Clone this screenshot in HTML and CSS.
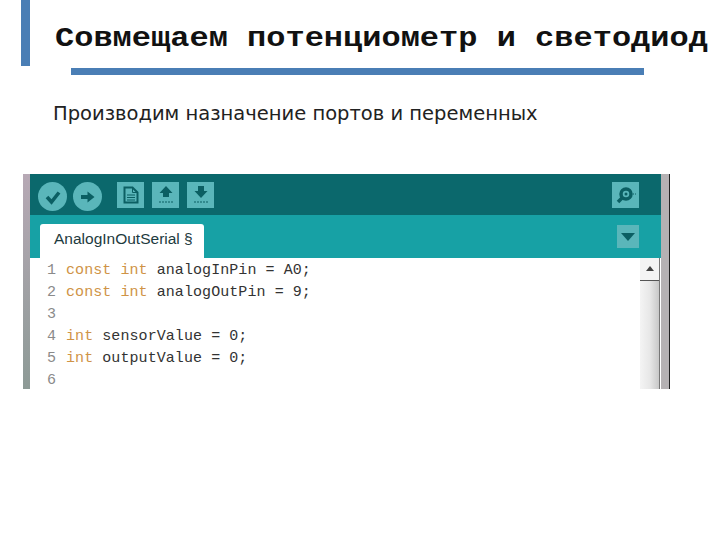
FILE: index.html
```html
<!DOCTYPE html>
<html lang="ru">
<head>
<meta charset="utf-8">
<title>Совмещаем потенциометр и светодиод</title>
<link rel="stylesheet" href="styles.css">
</head>
<body>
<div class="slide">
  <header class="head">
    <div class="accent"></div>
    <h1 class="title">Совмещаем потенциометр и светодиод</h1>
  </header>
  <div class="rule"></div>
  <p class="lead">Производим назначение портов и переменных</p>
  <div class="ide">
    <div class="edge-left"></div>
    <div class="window">
      <div class="toolbar">
        <span class="round"><svg width="18" height="18" viewBox="0 0 18 18"><path d="M3 9l4.500 5L15 4.500" fill="none" stroke="#0b5f63" stroke-width="3.600"/></svg></span>
        <span class="round"><svg width="16" height="14" viewBox="0 0 16 14"><path d="M1 5h6.500V1.500L14.500 7l-7 5.500V9H1z" fill="#0b5f63"/></svg></span>
        <span class="square first"><svg width="16" height="18" viewBox="0 0 16 18"><path d="M1.500 1.500h8l5 5v10h-13z" fill="#5ab6ba" stroke="#0b5f63" stroke-width="2"/><path d="M9.500 1.500v5h5M4 9h8M4 11.500h8M4 14h8" fill="none" stroke="#0b5f63"/></svg></span>
        <span class="square"><svg width="20" height="22" viewBox="0 0 20 22"><path d="M10 2l6.500 7H13v4H7V9H3.500z" fill="#0b5f63"/><path d="M3 18h14" stroke="#0b5f63" stroke-dasharray="2 1"/></svg></span>
        <span class="square"><svg width="20" height="22" viewBox="0 0 20 22"><path d="M7 2h6v5h3.500L10 14 3.500 7H7z" fill="#0b5f63"/><path d="M3 18h14" stroke="#0b5f63" stroke-dasharray="2 1"/></svg></span>
        <span class="square last"><svg width="24" height="22" viewBox="0 0 24 22"><circle cx="12" cy="10" r="5" fill="none" stroke="#0b5f63" stroke-width="3.500"/><circle cx="12" cy="10" r="1.500" fill="#0b5f63"/><path d="M8 14l-4 4" stroke="#0b5f63" stroke-width="3.500"/><path d="M19 10h4" stroke="#0b5f63" stroke-dasharray="1 1"/></svg></span>
      </div>
      <div class="tabs">
        <div class="tab">AnalogInOutSerial §</div>
        <span class="menu"><svg width="14" height="8" viewBox="0 0 14 8"><path d="M0 0h14L7 8z" fill="#0b5f63"/></svg></span>
      </div>
      <div class="editor">
        <div class="code">
          <div class="line"><span class="num">1</span><span><span class="kw">const</span> <span class="kw">int</span> analogInPin = A0;</span></div>
          <div class="line"><span class="num">2</span><span><span class="kw">const</span> <span class="kw">int</span> analogOutPin = 9;</span></div>
          <div class="line"><span class="num">3</span><span></span></div>
          <div class="line"><span class="num">4</span><span><span class="kw">int</span> sensorValue = 0;</span></div>
          <div class="line"><span class="num">5</span><span><span class="kw">int</span> outputValue = 0;</span></div>
          <div class="line"><span class="num">6</span><span></span></div>
        </div>
        <div class="scrollbar">
          <div class="arrow"></div>
          <div class="thumb"></div>
        </div>
      </div>
    </div>
    <div class="edge-right"></div>
  </div>
</div>
</body>
</html>
```
FILE: styles.css
```css
html, body { margin: 0; padding: 0; background: #fff; }
.slide { width: 720px; height: 540px; overflow: hidden; display: flex; flex-direction: column; }
.head { display: flex; height: 66px; padding-left: 21px; }
.accent { width: 9px; height: 66px; background: #4a7eb5; }
.title {
  margin: 20px 0 0 25px;
  font: bold 32px/36px "Liberation Mono", monospace;
  transform: scaleY(.85);
  color: #111;
  white-space: nowrap;
}
.rule { height: 7px; width: 573px; margin: 2px 0 0 71px; background: #4a7eb5; }
.lead {
  margin: 27px 0 0 53px;
  font: 19.500px/24px "DejaVu Sans", sans-serif;
  color: #222;
  white-space: nowrap;
}
.ide { display: flex; width: 647px; height: 215px; margin: 48px 0 0 23px; }
.edge-left { width: 7px; background: linear-gradient(#b7a9b5, #8d9a96); }
.edge-right { width: 9px; background: #b5b1b3; border-right: 1px solid #222; box-sizing: border-box; }
.window { width: 631px; display: flex; flex-direction: column; background: #fff; }
.toolbar { height: 41px; background: #0b686c; display: flex; align-items: flex-start; padding: 8px 22px 0 8px; box-sizing: border-box; }
.round { width: 29px; height: 29px; border-radius: 50%; background: #5ab6ba; margin-right: 6px; display: flex; align-items: center; justify-content: center; }
.square { width: 27px; height: 26px; background: #5ab6ba; margin-right: 8px; display: flex; align-items: center; justify-content: center; }
.first { margin-left: 9px; }
.last { margin: 0 0 0 auto; }
.tabs { height: 43px; background: #17a1a5; display: flex; align-items: flex-end; padding: 0 22px 0 10px; box-sizing: border-box; }
.tab {
  width: 164px; height: 34px; background: #fff; border-radius: 3px 3px 0 0;
  font: 15.500px/30px "Liberation Sans", sans-serif; color: #1d3a40;
  padding-left: 14px; box-sizing: border-box; white-space: nowrap;
}
.menu { width: 22px; height: 23px; margin: 0 0 10px auto; background: #5ab6ba; display: flex; align-items: center; justify-content: center; }
.editor { flex: 1; display: flex; min-height: 0; }
.code { flex: 1; padding-top: 2px; font: 15px/22px "Liberation Mono", monospace; letter-spacing: .07px; color: #333; overflow: hidden; }
.line { display: flex; height: 22px; white-space: pre; }
.num { width: 26px; text-align: right; margin-right: 10px; color: #8a8a8a; }
.kw { color: #cf9346; }
.scrollbar { width: 20px; background: #f4f4f4; border-right: 1px solid #777; box-sizing: border-box; margin-right: 1px; display: flex; flex-direction: column; align-items: center; }
.arrow { width: 0; height: 0; margin-top: 8px; border: 4px solid transparent; border-top: 0; border-bottom: 5px solid #444; }
.thumb { width: 19px; flex: 1; margin-top: 9px; background: linear-gradient(90deg, #f4f4f4, #e8e8e8 50%, #c8c8c8); border-top: 1px solid #555; }
```
